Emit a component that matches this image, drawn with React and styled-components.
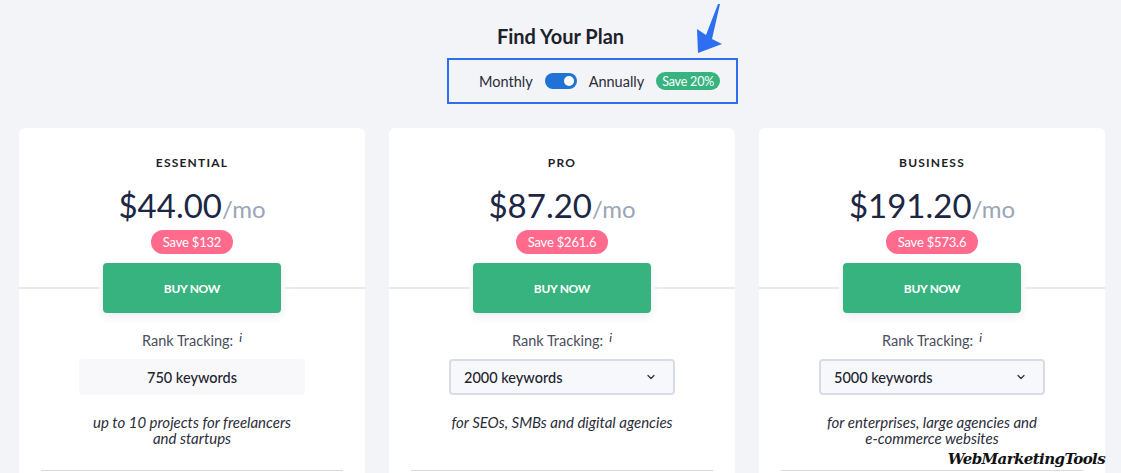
import styled, { createGlobalStyle } from 'styled-components';
import { ChevronDown } from 'lucide-react';

const GlobalStyle = createGlobalStyle`
    html, body {
        margin: 0;
        padding: 0;
        background: #f3f4f8;
        font-family: 'Lato', 'Noto Sans', sans-serif;
        overflow: hidden;
    }
`;

const Page = styled.div`
    position: relative;
    width: 1121px;
    height: 473px;
    overflow: hidden;
`;

const Title = styled.h1`
    margin: 0;
    padding-top: 24px;
    font-size: 20px;
    line-height: 24px;
    font-weight: 700;
    color: #1d1f2b;
    text-align: center;
`;

const ToggleWrap = styled.div`
    display: flex;
    justify-content: center;
    padding-left: 64px;
    margin-top: 10px;
`;

const ToggleBox = styled.div`
    box-sizing: border-box;
    width: 291px;
    height: 46px;
    border: 2px solid #2d6ff0;
    display: flex;
    align-items: center;
    gap: 12px;
    padding-left: 30px;
`;

const ToggleLabel = styled.span`
    font-size: 14.5px;
    color: #2a2d3a;
`;

const Switch = styled.span`
    position: relative;
    width: 32px;
    height: 16px;
    border-radius: 8px;
    background: #1f72d6;
    &::after {
        content: '';
        position: absolute;
        right: 3px;
        top: 3px;
        width: 10px;
        height: 10px;
        border-radius: 50%;
        background: #fff;
    }
`;

const Pill = styled.span`
    display: inline-flex;
    align-items: center;
    justify-content: center;
    height: ${({ h }) => h}px;
    padding: 0 ${({ px }) => px}px;
    border-radius: 999px;
    background: ${({ bg }) => bg};
    color: #fff;
    font-size: ${({ fs }) => fs}px;
    letter-spacing: -0.2px;
    white-space: nowrap;
`;

const Arrow = styled.svg`
    position: absolute;
    left: 690px;
    top: 0;
`;

const Cards = styled.div`
    display: grid;
    grid-template-columns: repeat(3, 346px);
    gap: 24px;
    padding-left: 19px;
    margin-top: 24px;
`;

const Card = styled.div`
    background: #fff;
    border-radius: 6px 6px 0 0;
    padding-top: 28px;
    height: 400px;
    display: flex;
    flex-direction: column;
    align-items: center;
`;

const PlanName = styled.div`
    font-size: 12px;
    line-height: 14px;
    font-weight: 700;
    letter-spacing: 1.2px;
    color: #1c1d28;
`;

const Price = styled.div`
    margin-top: 15px;
    height: 40px;
    display: flex;
    align-items: baseline;
    font-size: 33px;
    line-height: 40px;
    color: #1b2744;
    span {
        font-size: 24px;
        color: #9aa6b6;
    }
`;

const SaveRow = styled.div`
    margin-top: 5px;
`;

const BuyRow = styled.div`
    align-self: stretch;
    margin-top: 9px;
    display: flex;
    align-items: center;
    gap: 4px;
`;

const Line = styled.div`
    flex: 1;
    height: 2px;
    background: #e9eaf0;
`;

const BuyButton = styled.button`
    width: 178px;
    height: 50px;
    border: none;
    border-radius: 4px;
    background: #37b37f;
    color: #fff;
    font-family: inherit;
    font-size: 12px;
    font-weight: 700;
    letter-spacing: -0.3px;
    box-shadow: 0 4px 10px rgba(30, 40, 60, 0.08);
`;

const RankLabel = styled.div`
    margin-top: 15px;
    font-size: 14.5px;
    line-height: 20px;
    color: #4a4e5c;
    i {
        margin-left: 6px;
        font-size: 12px;
        vertical-align: 4px;
        color: #2a2d3a;
    }
`;

const KeywordBox = styled.div`
    box-sizing: border-box;
    margin-top: 8px;
    width: 226px;
    height: 36px;
    display: flex;
    align-items: center;
    justify-content: ${({ select }) => (select ? 'space-between' : 'center')};
    padding: ${({ select }) => (select ? '0 16px 0 13px' : '0')};
    border-radius: 4px;
    background: ${({ select }) => (select ? '#f7f8fc' : '#f8f8fb')};
    border: ${({ select }) => (select ? '2px solid #d9dce4' : 'none')};
    font-size: 14.5px;
    font-weight: 500;
    color: #22242e;
`;

const Desc = styled.p`
    margin: 19px 0 0;
    min-height: 32px;
    font-size: 15px;
    line-height: 16px;
    font-style: italic;
    text-align: center;
    white-space: nowrap;
    color: #2b2d3a;
`;

const BottomLine = styled.div`
    align-self: stretch;
    margin: 24px 22px 0;
    height: 1px;
    background: #d8d9df;
`;

const Watermark = styled.div`
    position: absolute;
    right: 16px;
    bottom: 5px;
    font-family: 'DejaVu Serif', serif;
    font-style: italic;
    font-weight: 700;
    font-size: 15px;
    letter-spacing: -0.6px;
    color: #111;
`;

const plans = [
    { name: 'ESSENTIAL', price: '$44.00', save: 'Save $132', keywords: '750 keywords', select: false, desc: ['up to 10 projects for freelancers', 'and startups'] },
    { name: 'PRO', price: '$87.20', save: 'Save $261.6', keywords: '2000 keywords', select: true, desc: ['for SEOs, SMBs and digital agencies'] },
    { name: 'BUSINESS', price: '$191.20', save: 'Save $573.6', keywords: '5000 keywords', select: true, desc: ['for enterprises, large agencies and', 'e-commerce websites'] },
];

export default function App() {
    return (
        <Page>
            <GlobalStyle />
            <Title>Find Your Plan</Title>
            <ToggleWrap>
                <ToggleBox>
                    <ToggleLabel>Monthly</ToggleLabel>
                    <Switch />
                    <ToggleLabel>Annually</ToggleLabel>
                    <Pill h={18} px={6} fs={12.5} bg="#37b37f">Save 20%</Pill>
                </ToggleBox>
            </ToggleWrap>
            <Arrow width="40" height="56" viewBox="0 0 40 56">
                <path d="M30 4 L22 39 L32 44 L8 53 L7 29 L16 35 L28 4 Z" fill="#2d6ff0" />
            </Arrow>
            <Cards>
                {plans.map((p) => (
                    <Card key={p.name}>
                        <PlanName>{p.name}</PlanName>
                        <Price>{p.price}<span>/mo</span></Price>
                        <SaveRow>
                            <Pill h={24} px={12} fs={13} bg="#ff6a8d">{p.save}</Pill>
                        </SaveRow>
                        <BuyRow>
                            <Line />
                            <BuyButton>BUY NOW</BuyButton>
                            <Line />
                        </BuyRow>
                        <RankLabel>Rank Tracking:<i>i</i></RankLabel>
                        <KeywordBox select={p.select}>
                            {p.keywords}
                            {p.select && <ChevronDown size={12} strokeWidth={2.5} color="#333" />}
                        </KeywordBox>
                        <Desc>
                            {p.desc.map((l, i) => (
                                <span key={i}>{i > 0 && <br />}{l}</span>
                            ))}
                        </Desc>
                        <BottomLine />
                    </Card>
                ))}
            </Cards>
            <Watermark>WebMarketingTools</Watermark>
        </Page>
    );
}
